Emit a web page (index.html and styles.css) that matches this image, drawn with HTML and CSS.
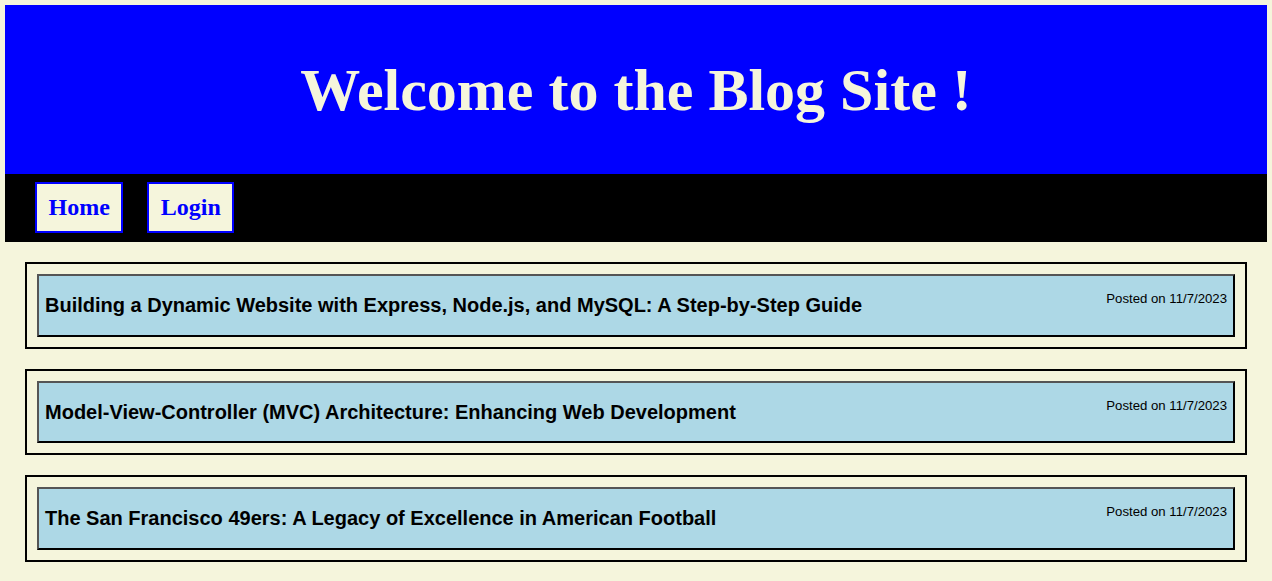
FILE: index.html
```html
<!DOCTYPE html>
<html lang="en">
<head>
<meta charset="utf-8">
<title>Blog Site</title>
<link rel="stylesheet" href="styles.css">
</head>
<body>
  <header class="site-header">
    <h1 class="site-title">Welcome to the Blog Site !</h1>
  </header>
  <nav class="site-nav">
    <a class="nav-link" href="#">Home</a>
    <a class="nav-link" href="#">Login</a>
  </nav>
  <main class="posts">
    <article class="post">
      <div class="post-inner">
        <h2 class="post-title">Building a Dynamic Website with Express, Node.js, and MySQL: A Step-by-Step Guide</h2>
        <p class="post-date">Posted on 11/7/2023</p>
      </div>
    </article>
    <article class="post">
      <div class="post-inner">
        <h2 class="post-title">Model-View-Controller (MVC) Architecture: Enhancing Web Development</h2>
        <p class="post-date">Posted on 11/7/2023</p>
      </div>
    </article>
    <article class="post">
      <div class="post-inner">
        <h2 class="post-title">The San Francisco 49ers: A Legacy of Excellence in American Football</h2>
        <p class="post-date">Posted on 11/7/2023</p>
      </div>
    </article>
  </main>
</body>
</html>
```
FILE: styles.css
```css
html, body {
  background: #f5f5dc;
}
body {
  margin: 5px;
  font-family: "Liberation Serif", "Times New Roman", serif;
}
.site-header {
  background: #0000ff;
  padding: 52px 0 51px;
  text-align: center;
}
.site-title {
  margin: 0;
  font-family: "Liberation Serif", "Times New Roman", serif;
  font-weight: bold;
  font-size: 60px;
  line-height: 66px;
  color: #f5f5dc;
}
.site-nav {
  background: #000;
  display: flex;
  gap: 24px;
  padding: 8px 30px 9px;
  align-items: flex-start;
}
.nav-link {
  display: block;
  background: #f5f5dc;
  border: 2px solid #0000ff;
  color: #0000ff;
  text-decoration: none;
  font-weight: bold;
  font-size: 24px;
  line-height: 27px;
  padding: 10px 11.5px;
}
.posts {
  padding: 20px;
  display: flex;
  flex-direction: column;
  gap: 20px;
}
.post {
  border: 2px solid #000;
  padding: 10px;
}
.post-inner {
  background: #add8e6;
  border: 2px solid;
  border-color: #555 #000 #000 #555;
  padding: 0 6px;
  display: flex;
  justify-content: space-between;
  align-items: flex-start;
  font-family: "Liberation Sans", Arial, sans-serif;
  color: #000;
}
.post-title {
  margin: 18px 0 17.5px;
  font-size: 20px;
  font-weight: bold;
  line-height: 23px;
}
.post-date {
  margin: 15px 0 0;
  font-size: 13.2px;
  line-height: 15px;
  white-space: nowrap;
}
```
